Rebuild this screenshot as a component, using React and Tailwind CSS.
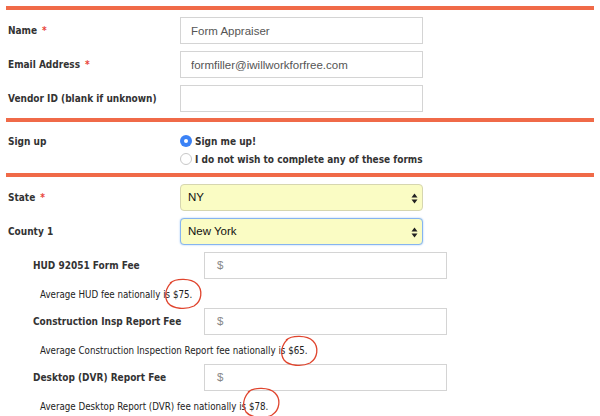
import React from "react";

const labelFont = { fontFamily: '"DejaVu Sans Condensed", "DejaVu Sans", Verdana, sans-serif' };
const inputFont = { fontFamily: '"Liberation Sans", Arial, sans-serif' };

function Bar() {
  return <div className="h-[4px] bg-[#f06a48]" />;
}

function Star() {
  return <span className="text-[#e8463a] ml-[5px]">*</span>;
}

function Label({ children, className = "" }) {
  return (
    <div
      className={`whitespace-nowrap text-[10px] font-bold text-[#333] ${className}`}
      style={labelFont}
    >
      {children}
    </div>
  );
}

function TextRow({ label, star, value }) {
  return (
    <div className="flex items-center h-[27px]">
      <Label className="w-[174px] pl-[2px]">
        {label}
        {star && <Star />}
      </Label>
      <input
        readOnly
        value={value}
        className="w-[243px] h-[27px] border border-[#d4d4d4] px-[10px] text-[11.5px] text-[#555] outline-none"
        style={inputFont}
      />
    </div>
  );
}

function Arrows() {
  return (
    <svg width="7" height="11" viewBox="0 0 7 11" className="absolute right-[4px] top-[8px]">
      <path d="M3.5 0.5 L6.5 4.5 L0.5 4.5 Z" fill="#222" />
      <path d="M3.5 10.5 L6.5 6.5 L0.5 6.5 Z" fill="#222" />
    </svg>
  );
}

function SelectRow({ label, star, value, focused }) {
  return (
    <div className="flex items-center h-[27px]">
      <Label className="w-[174px] pl-[2px]">
        {label}
        {star && <Star />}
      </Label>
      <div
        className={`relative w-[243px] h-[27px] rounded-[4px] bg-[#fafcc4] border ${
          focused ? "border-[#86b4f0] shadow-[0_0_2px_#9cc4f5]" : "border-[#d6d6b0]"
        } flex items-center px-[7px] text-[11.5px] text-[#111]`}
        style={inputFont}
      >
        {value}
        <Arrows />
      </div>
    </div>
  );
}

// hand drawn red ring round the amount
function Ring({ left, top }) {
  return (
    <svg
      width="40"
      height="32"
      viewBox="0 0 40 32"
      className="absolute pointer-events-none"
      style={{ left, top }}
    >
      <path
        d="M7 5 C13 0 28 0 34 6 C40 12 39 23 31 28 C23 32 10 31 5 25 C1 19 2 10 9 4"
        fill="none"
        stroke="#e0452e"
        strokeWidth="1.3"
      />
    </svg>
  );
}

function FeeRow({ label, prefix, amount, ring }) {
  return (
    <div>
      <div className="flex items-center h-[27px] pl-[25px]">
        <Label className="w-[173px] pl-[2px]">{label}</Label>
        <div
          className="w-[243px] h-[27px] border border-[#d4d4d4] px-[12px] flex items-center text-[11.5px] text-[#888]"
          style={inputFont}
        >
          $
        </div>
      </div>
      <div
        className="h-[29px] pt-[3px] flex items-center pl-[34px] text-[9.7px] leading-[12px] text-[#222] whitespace-nowrap"
        style={labelFont}
      >
        {prefix}&nbsp;
        <span className="relative">
          {amount}
          <Ring left={ring[0]} top={ring[1]} />
        </span>
      </div>
    </div>
  );
}

function Radio({ checked, label }) {
  return (
    <div className="flex items-center gap-[3px] h-[18px]">
      {checked ? (
        <span className="w-[12px] h-[12px] rounded-full bg-[#3b82f6] flex items-center justify-center">
          <span className="w-[4px] h-[4px] rounded-full bg-white" />
        </span>
      ) : (
        <span className="w-[12px] h-[12px] rounded-full border border-[#c8c8c8] bg-white" />
      )}
      <Label>{label}</Label>
    </div>
  );
}

export default function App() {
  return (
    <div className="relative w-[600px] h-[416px] overflow-hidden bg-white px-[6px] pt-[6px]">
      <Bar />
      <div className="flex flex-col gap-[7px] pt-[7px] pb-[6px]">
        <TextRow label="Name" star value="Form Appraiser" />
        <TextRow label="Email Address" star value="formfiller@iwillworkforfree.com" />
        <TextRow label="Vendor ID (blank if unknown)" value="" />
      </div>
      <Bar />
      <div className="flex pt-[10px] pb-[5px]">
        <div className="w-[174px] pl-[2px] h-[18px] flex items-center">
          <Label>Sign up</Label>
        </div>
        <div className="flex flex-col">
          <Radio checked label="Sign me up!" />
          <Radio label="I do not wish to complete any of these forms" />
        </div>
      </div>
      <Bar />
      <div className="flex flex-col gap-[7px] pt-[7px] pb-[7px]">
        <SelectRow label="State" star value="NY" />
        <SelectRow label="County 1" value="New York" focused />
      </div>
      <FeeRow
        label="HUD 92051 Form Fee"
        prefix="Average HUD fee nationally is"
        amount="$75."
        ring={[-10, -11]}
      />
      <FeeRow
        label="Construction Insp Report Fee"
        prefix="Average Construction Inspection Report fee nationally is"
        amount="$65."
        ring={[-9, -10]}
      />
      <FeeRow
        label="Desktop (DVR) Report Fee"
        prefix="Average Desktop Report (DVR) fee nationally is"
        amount="$78."
        ring={[-8, -14]}
      />
    </div>
  );
}
